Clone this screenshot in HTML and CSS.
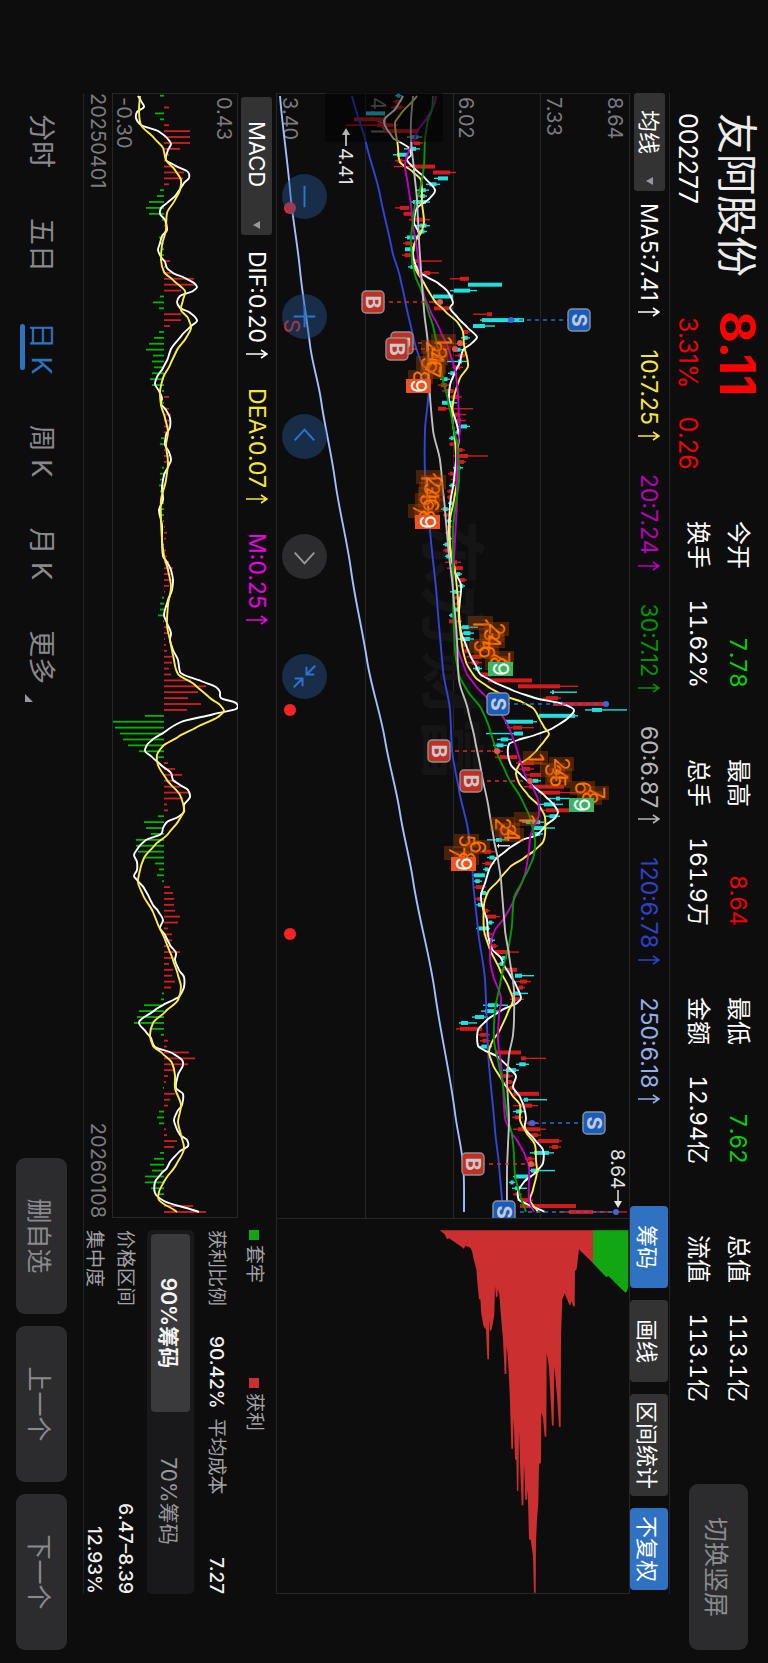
FILE: index.html
```html
<!DOCTYPE html>
<html lang="zh-CN">
<head>
    <meta charset="UTF-8">
    <meta name="viewport" content="width=device-width, initial-scale=1.0">
    <title>友阿股份 002277</title>
    <link rel="stylesheet" href="styles.css">
</head>
<body>
    <svg class="defs" aria-hidden="true">
        <symbol id="arrow-up" viewBox="0 0 12 22">
            <path d="M6 22V1M2 7L6 1l4 6" fill="none" stroke="currentColor" stroke-width="1.6"/>
        </symbol>
    </svg>
    <div class="screen">
        <header class="quote">
            <h1 class="name">友阿股份</h1>
            <strong class="price">8.11</strong>
            <span class="code">002277</span>
            <span class="change"><span>3.31%</span><span>0.26</span></span>
        </header>
        <dl class="stats">
            <div><dt>今开</dt><dd class="down">7.78</dd></div>
            <div><dt>最高</dt><dd class="up">8.64</dd></div>
            <div><dt>最低</dt><dd class="down">7.62</dd></div>
            <div><dt>总值</dt><dd>113.1亿</dd></div>
            <div><dt>换手</dt><dd>11.62%</dd></div>
            <div><dt>总手</dt><dd>161.9万</dd></div>
            <div><dt>金额</dt><dd>12.94亿</dd></div>
            <div><dt>流值</dt><dd>113.1亿</dd></div>
        </dl>
        <button class="soft-btn rotate-btn">切换竖屏</button>

        <main class="board">
            <div class="toolbar">
                <span class="picker">
                    <select aria-label="主图指标"><option>均线</option></select>
                </span>
                <ul class="values">
                    <li class="ma5">MA5:7.41<svg><use href="#arrow-up"/></svg></li>
                    <li class="ma10">10:7.25<svg><use href="#arrow-up"/></svg></li>
                    <li class="ma20">20:7.24<svg><use href="#arrow-up"/></svg></li>
                    <li class="ma30">30:7.12<svg><use href="#arrow-up"/></svg></li>
                    <li class="ma60">60:6.87<svg><use href="#arrow-up"/></svg></li>
                    <li class="ma120">120:6.78<svg><use href="#arrow-up"/></svg></li>
                    <li class="ma250">250:6.18<svg><use href="#arrow-up"/></svg></li>
                </ul>
                <div class="tools">
                    <button class="on">筹码</button>
                    <button>画线</button>
                    <button>区间统计</button>
                    <button class="on">不复权</button>
                </div>
            </div>

            <section class="charts">
                <div class="price-pane">
                    <svg id="price-chart" viewBox="0 0 1125 354"></svg>
                    <div class="controls">
                        <button aria-label="缩小"><svg viewBox="0 0 46 46"><path d="M12 23h22"/></svg></button>
                        <button aria-label="放大"><svg viewBox="0 0 46 46"><path d="M12 23h22M23 12v22"/></svg></button>
                        <button aria-label="向左"><svg viewBox="0 0 46 46"><path d="M27 13L16 23l11 10"/></svg></button>
                        <button aria-label="向右" class="off"><svg viewBox="0 0 46 46"><path d="M19 13l11 10-11 10"/></svg></button>
                        <button aria-label="收起"><svg viewBox="0 0 46 46"><path d="M12 12l9 9M21 13v8h-8M34 34l-9-9M25 33v-8h8"/></svg></button>
                    </div>
                </div>
                <div class="macd-bar">
                    <span class="picker">
                        <select aria-label="副图指标" class="wide"><option>MACD</option></select>
                    </span>
                    <ul class="values">
                        <li class="ma5">DIF:0.20<svg><use href="#arrow-up"/></svg></li>
                        <li class="ma10">DEA:0.07<svg><use href="#arrow-up"/></svg></li>
                        <li class="macd">M:0.25<svg><use href="#arrow-up"/></svg></li>
                    </ul>
                </div>
                <svg id="macd-chart" viewBox="0 0 1125 126"></svg>
                <div class="dates"><span>20250401</span><span>20260108</span></div>
            </section>

            <aside class="chips">
                <svg id="chip-chart" viewBox="0 0 1128 1062"></svg>
                <div class="chip-info">
                    <div class="legend"><span class="lock">套牢</span><span class="gain">获利</span></div>
                    <div class="pair">
                        <span>获利比例</span><b>90.42%</b><span>平均成本</span><b>7.27</b>
                    </div>
                    <div class="segment">
                        <button class="active">90%筹码</button>
                        <button>70%筹码</button>
                    </div>
                    <div class="rows">
                        <div><span>价格区间</span><b>6.47–8.39</b></div>
                        <div><span>集中度</span><b>12.93%</b></div>
                    </div>
                </div>
            </aside>
        </main>

        <footer class="bottom">
            <nav class="tabs">
                <a href="#">分时</a>
                <a href="#">五日</a>
                <a href="#" class="active">日 K</a>
                <a href="#">周 K</a>
                <a href="#">月 K</a>
                <a href="#" class="more">更多</a>
            </nav>
            <div class="actions">
                <button class="soft-btn">删自选</button>
                <button class="soft-btn">上一个</button>
                <button class="soft-btn">下一个</button>
            </div>
        </footer>
    </div>
    <script src="chart.js"></script>
</body>
</html>
```

FILE: styles.css
```css
* {
    box-sizing: border-box;
}
body {
    margin: 0;
    height: 100vh;
    overflow: hidden;
    background: #0d0d0d;
    color: #fff;
    font-family: Inter, "Noto Sans CJK SC", sans-serif;
}
h1, dl, dd, ul {
    margin: 0;
    padding: 0;
}
button, select {
    font-family: inherit;
    border: 0;
    margin: 0;
    padding: 0;
}
.defs {
    position: absolute;
    width: 0;
    height: 0;
}

/* landscape layout turned onto the portrait window */
.screen {
    width: 100vh;
    height: 100vw;
    transform-origin: 0 0;
    transform: translateX(100vw) rotate(90deg);
    display: grid;
    grid-template-columns: 428px 1fr auto;
    grid-template-rows: 98px auto 1fr;
    padding: 0 13px 0 93px;
}

/* header */
.quote {
    display: grid;
    grid-template-columns: 198px auto;
    grid-template-rows: 50px 32px;
    row-gap: 8px;
    align-content: start;
    align-items: center;
    padding: 6px 0 0 20px;
}
.name {
    font-size: 41px;
    line-height: 50px;
    font-weight: 400;
    color: #ececec;
}
.price {
    font-size: 49px;
    line-height: 50px;
    font-weight: 700;
    color: #f00;
}
.code, .change {
    font-size: 25px;
    line-height: 32px;
}
.change {
    display: flex;
    gap: 28px;
    padding-left: 6px;
    color: #f00000;
}
.stats {
    display: grid;
    grid-template-columns: repeat(4, 167px);
    column-gap: 71px;
    grid-auto-rows: 40px;
    padding-top: 10px;
    font-size: 24px;
    line-height: 40px;
}
.stats div {
    display: flex;
    justify-content: space-between;
}
.stats dd {
    font-size: 23px;
    font-variant-numeric: tabular-nums;
}
.stats .up {
    color: #f00000;
}
.stats .down {
    color: #00d200;
}
.soft-btn {
    height: 51px;
    width: 156px;
    border-radius: 9px;
    background: #2c2c2e;
    color: #8a8a8f;
    font-size: 25px;
}
.rotate-btn {
    width: 166px;
    height: 59px;
    margin-top: 20px;
}

/* board */
.board {
    grid-column: 1 / -1;
    margin-right: 56px;
    display: grid;
    grid-template-columns: 1fr 376px;
    border-top: 1px solid #232325;
    border-bottom: 1px solid #232325;
}
.toolbar {
    grid-column: 1 / -1;
    height: 39px;
    display: flex;
    align-items: center;
}
.picker {
    position: relative;
    display: flex;
}
.picker::after {
    content: "";
    position: absolute;
    right: 6px;
    top: 12px;
    border: 4px solid transparent;
    border-top: 7px solid #98989c;
    border-bottom: 0;
}
.picker select {
    appearance: none;
    width: 98px;
    height: 31px;
    padding-left: 17px;
    border-radius: 3px;
    background: #333;
    color: #fff;
    font-size: 22px;
}
.picker select.wide {
    width: 138px;
    padding-left: 24px;
}
.values {
    display: flex;
    gap: 32px;
    padding-left: 12px;
    list-style: none;
    font-size: 23px;
    line-height: 38px;
}
.values li {
    display: flex;
    align-items: center;
    gap: 5px;
}
.values svg {
    width: 12px;
    height: 22px;
}
.macd-bar .values {
    gap: 28px;
    padding-left: 16px;
}
.ma5 { color: #fff; }
.ma10 { color: #f5e63c; }
.ma20 { color: #b900b9; }
.ma30 { color: #009100; }
.ma60 { color: #b4b4b4; }
.ma120 { color: #3040c8; }
.ma250 { color: #94aeea; }
.macd { color: #ec00e4; }
.tools {
    display: flex;
    gap: 12px;
    margin-left: auto;
    padding-right: 4px;
}
.tools button {
    height: 38px;
    min-width: 82px;
    padding: 0 7px;
    border-radius: 4px;
    background: #333;
    color: #fff;
    font-size: 22px;
}
.tools .on {
    background: #3072c2;
}
.price-pane {
    position: relative;
}
.price-pane > svg, #macd-chart, #chip-chart {
    display: block;
    width: 100%;
}
.controls {
    position: absolute;
    left: 81px;
    bottom: 6px;
    display: flex;
    gap: 75px;
}
.controls button {
    width: 45px;
    height: 45px;
    border-radius: 50%;
    background: rgba(36, 84, 144, .45);
    color: #2f74c8;
}
.controls .off {
    background: #2c2c2e;
    color: #98989c;
}
.controls svg {
    display: block;
    fill: none;
    stroke: currentColor;
    stroke-width: 2;
}
.macd-bar {
    height: 38px;
    display: flex;
    align-items: center;
    padding-left: 4px;
}
.dates {
    display: flex;
    justify-content: space-between;
    font-size: 20px;
    line-height: 28px;
    color: #7c7c80;
}

/* chip panel */
.chip-info {
    padding: 6px 0 0 12px;
    font-size: 19px;
    color: #a2a2a6;
}
.chip-info b {
    font-weight: 500;
    color: #f0f0f0;
}
.legend {
    display: flex;
    line-height: 32px;
}
.legend span {
    width: 148px;
    display: flex;
    align-items: center;
    gap: 5px;
}
.legend span::before {
    content: "";
    width: 10px;
    height: 10px;
    background: #12a612;
}
.legend .gain::before {
    background: #cc2f30;
}
.pair {
    display: flex;
    line-height: 44px;
}
.pair span:first-child {
    margin-right: 30px;
}
.pair span:nth-child(3) {
    margin-left: 10px;
}
.pair b:last-child {
    margin-left: auto;
}
.segment {
    display: flex;
    height: 47px;
    padding: 4px;
    border-radius: 5px;
    background: #19191b;
}
.segment button {
    flex: 1;
    border-radius: 4px;
    background: none;
    color: #98989c;
    font-size: 21px;
}
.segment .active {
    background: #3a3a3c;
    color: #f4f4f4;
    font-weight: 600;
}
.rows {
    display: grid;
    gap: 11px;
    padding-top: 12px;
    line-height: 20px;
}
.rows div {
    display: flex;
    justify-content: space-between;
}

/* bottom bar */
.bottom {
    grid-column: 1 / -1;
    display: flex;
    justify-content: space-between;
    align-items: center;
}
.tabs {
    display: flex;
    gap: 50px;
    padding-left: 21px;
    font-size: 27px;
    line-height: 40px;
}
.tabs a {
    position: relative;
    color: #88888d;
    text-decoration: none;
    white-space: nowrap;
}
.tabs .active {
    color: #3072c2;
}
.tabs .active::after {
    content: "";
    position: absolute;
    left: 2px;
    right: 5px;
    bottom: -1px;
    height: 5px;
    border-radius: 3px;
    background: #3072c2;
}
.tabs .more::after {
    content: "";
    position: absolute;
    right: -18px;
    bottom: 4px;
    border: 4px solid transparent;
    border-right-color: #98989c;
    border-bottom-color: #98989c;
}
.actions {
    display: flex;
    gap: 12px;
}

/* chart drawing */
.grid line, .grid rect {
    stroke: #262628;
    fill: none;
}
.axis {
    font-size: 20px;
    fill: #7c7c80;
}
.note {
    font-size: 19px;
    fill: #e4e4e4;
}
.watermark {
    font-size: 66px;
    font-weight: 700;
    fill: #151515;
}
.mark {
    font-size: 20px;
    font-weight: 700;
    text-anchor: middle;
    fill: #c6c9d0;
}
.tag {
    font-size: 22px;
    text-anchor: middle;
    fill: #ff7300;
}
.tag-nine {
    font-size: 22px;
    text-anchor: middle;
    fill: #fff;
}
.signal {
    font-size: 22px;
    fill: #ff2424;
    text-anchor: middle;
}
```

FILE: chart.js
```javascript
// x is measured from the left of the screen, levels from its foot
const LEFT = 93;
const STEP = 5.906;
const FIRST = 95.7;
const NS = 'http://www.w3.org/2000/svg';

function add(parent, tag, attrs, text) {
    const el = document.createElementNS(NS, tag);
    for (const key in attrs) {
        el.setAttribute(key, attrs[key]);
    }
    if (text !== undefined) {
        el.textContent = text;
    }
    parent.appendChild(el);
    return el;
}

function barX(i) {
    return FIRST + STEP * i - LEFT;
}

// "x,level x,level" -> curve through every point
function drawLine(svg, top, data, color) {
    const pts = data.trim().split(/\s+/).map(p => {
        const [x, v] = p.split(',').map(Number);
        return [x - LEFT, top - v];
    });
    let d = 'M' + pts[0];
    for (let i = 0; i < pts.length - 1; i++) {
        const a = pts[i], b = pts[i + 1];
        const before = pts[i - 1] || a, after = pts[i + 2] || b;
        const c1 = [a[0] + (b[0] - a[0]) / 3, a[1] + (b[1] - before[1]) / (b[0] - before[0]) * (b[0] - a[0]) / 4];
        const c2 = [b[0] - (b[0] - a[0]) / 3, b[1] - (after[1] - a[1]) / (after[0] - a[0]) * (b[0] - a[0]) / 4];
        d += 'C' + c1 + ' ' + c2 + ' ' + b;
    }
    add(svg, 'path', { d: d, fill: 'none', stroke: color, 'stroke-width': 1.9, 'stroke-linejoin': 'round' });
}

const PRICE_TOP = 630;
const MACD_TOP = 238;

// r = rise, c = fall, w = flat; low-high, then the body when it is not the inner part
const candles = `c395-402 r393-402 r391-405 c366-385-366-385 r354-385-354-385 r346-398-377-393 r384-418-384-418 c407-422 r411-423 c404-420
c393-407-397-407 r395-405 r394-435-413-435 r433-456-433-450 c434-448-438-448 c426-440 c416-429 c418-427 c410-430-413-426 r395-409-400-409
r403-415-404-412 r409-430 c416-430 c417-427 c405-420-407-417 r403-413 c405-415-405-415 r402-413 r412-442-413-419 c408-418
r420-439-424-430 r450-469-460-469 c468-502-468-502 c450-477-454-470 c433-453-433-453 r432-443 r434-453-434-449 r473-492-487-492 c480-524-482-524 c473-495-473-485
r462-470 c461-470 r455-467 c453-463 r455-468 c447-467-458-462 r452-463 c448-457 c440-450 r438-450
r442-457 r448-462 c442-457-442-454 r438-473-438-446 r450-466-455-460 r452-466-457-461 c458-470 c455-460 c449-455 r449-454
r455-465 r453-488-455-468 r458-466 c453-463 r448-455 r451-458 c449-455 r447-453 r447-452 c448-454
c441-450 r443-449 c446-452 r446-452 r445-451 c447-452 c443-450 r443-450 c445-450 r445-461
r447-463-452-463 c455-462 r458-467 c458-465 c450-460 r454-460 r455-460 c453-460 c449-454 r449-462-449-456
c460-478-462-469 c460-474 c458-474-462-470 r462-468 r463-470 r467-482-470-481 r468-482 c473-482 r480-492-480-492 r488-532-488-532
r518-578-518-560 c550-577-552-554 r543-561-546-558 r553-607-553-607 c585-627-592-602 c539-578-539-575 c505-537-505-533 r507-534-513-522 c486-523-514-523 c497-512
c493-507 r492-503 r495-517-500-517 r516-543-518-534 r518-534 r524-541-530-541 c530-541 r524-564-529-564 r538-582-541-560 c546-570-556-560
c539-563-544-555 r540-570-546-570 c546-560 c522-544-526-540 c532-555-534-545 c531-543 c487-508-496-502 w497-510-498-499 r480-495 c487-497
r482-495 c483-490 c473-485-474-485 c473-482 r473-486-476-483 c480-488 r475-484 c476-484 r482-490 r484-500-487-496
c487-494 c476-490-478-489 r483-493 c487-495 r490-498 r495-519-495-510 c500-507 c498-505 r500-517-507-517 c515-534-515-522
r513-531-520-527 r517-525 c512-528-515-520 r510-524 c483-508-488-498 c481-499-485-495 c472-488-475-484 c459-477-461-468 r456-482-460-482 r477-490
r480-490 c478-492 r495-521-495-521 r521-546-521-526 c516-529 c503-519-506-516 r500-513 r505-514 r508-515 r513-539-514-539
c523-547-524-528 r513-538-520-532 c513-525 r512-523 r524-539 r513-546-518-540 r528-541 r533-562-538-559 r549-561 c530-554-534-549
r525-535 r528-537 c529-555-531-539 c513-532-514-528 c509-515 c512-527-515-520 r513-522 r517-533 r520-576-520-576 r559-627-569-593`.trim().split(/\s+/);

const histogram = [-4, 0, 5, -9, -4, 5, 26, 26, 26, 16, 5, 3, 13, 20, 19, 5, -4, -7, -15, -18, -15, -2, 2, 2, -5, -4, -3, -2, 6, 3,
    10, 30, 32, 17, -4, -11, -5, 17, 17, 6, -5, -10, -15, -18, -11, -12, -10, -12, -14, -12, -2, 5, -3, 5, 7, 7, 5, 3, -3, -4,
    1, 5, 4, -2, -4, -4, -5, -4, -1, -2, -3, -3, -1, 1, 3, 2, -1, 2, 3, 5, 9, 7, 8, 5, 1, -2, -4, -4, -6, -1,
    4, 4, 1, 2, 3, 8, 8, 5, 7, 27, 42, 34, 24, 37, 23, -19, -51, -49, -44, -41, -36, -25, -8, 4, 11, 18, 12, 16, 25, 19,
    3, 4, -6, -20, -18, -13, -28, -28, -26, -19, -9, -5, -7, -2, 6, 9, 10, 10, 11, 16, 14, 4, 8, 8, 6, 16, 11, 5, 9, 8,
    11, 7, -2, -3, -20, -25, -27, -30, -13, -3, 4, 3, 25, 31, 24, 10, 4, 2, -1, 11, 6, 4, -5, -7, -5, 2, 3, 13, 10, -4,
    -10, -14, -12, -19, -19, -13, -6, 0, 29, 42];

const averages = [
    ['#a4beff', `96,280 190,290 270,300 345,310 400,321 480,335 570,351 660,367 740,385 813,400 880,413 993,435 1113,455 1163,463 1185,464 1212,464`],
    ['#3344d8', `96,352 143,366 195,380 250,392 277,400 300,405 340,414 375,425 388,429 400,428 430,425 475,425 530,430 600,437 670,443 710,450 750,452 790,459 830,468 860,472 880,473 930,478 980,485 1050,488 1130,495 1165,499 1212,503`],
    ['#fff', `96,403 108,396 121,384 138,393 142,400 148,409 155,411 160,407 168,414 177,424 190,435 198,430 208,417 214,415 223,414 233,419 240,416 250,413 260,414 272,419 277,427 283,438 292,448 303,453 308,450 318,458 327,467 337,477 343,472 350,463 362,460 372,455 385,450 400,449 412,453 425,457 437,459 460,456 480,454 505,450 530,449 550,450 570,454 585,461 600,460 612,459 632,461 645,466 655,470 668,477 674,480 681,492 690,512 698,535 704,563 710,574 718,568 728,553 735,535 740,518 744,509 755,508 765,511 775,521 785,532 795,544 805,554 812,558 818,555 825,546 835,537 840,522 850,507 860,495 870,489 880,486 895,481 905,482 920,487 935,488 949,492 958,501 965,504 975,510 985,516 998,521 1003,517 1010,502 1020,487 1030,478 1046,478 1050,484 1057,498 1070,511 1076,516 1087,513 1097,520 1107,524 1118,526 1128,525 1140,535 1150,543 1163,543 1172,536 1182,524 1192,518 1200,519 1204,527 1212,545`],
    ['#ffec4a', `96,417 115,400 123,395 147,398 162,400 172,413 180,421 203,422 222,424 233,421 242,415 253,412 265,413 272,417 283,424 300,434 311,445 323,458 332,463 345,464 366,468 378,460 397,454 415,452 440,455 480,457 500,454 520,450 545,450 570,455 600,458 620,459 645,462 662,466 677,475 686,487 696,505 702,522 709,534 718,539 727,544 734,549 740,545 750,537 757,530 765,519 773,516 783,519 795,528 807,540 817,545 835,545 842,543 850,535 858,524 867,510 880,499 892,488 905,484 930,484 947,489 970,500 988,509 1000,513 1012,508 1030,500 1042,492 1052,489 1065,493 1080,502 1095,512 1105,520 1120,520 1132,526 1145,535 1160,536 1172,537 1190,533 1200,530 1212,538`],
    ['#c000c0', `96,436 105,434 118,427 130,418 140,414 150,409 165,405 185,408 205,411 225,413 250,417 272,420 295,424 310,430 330,440 350,449 375,456 395,458 420,459 430,460 450,457 500,457 540,455 580,453 620,454 645,457 672,466 685,475 698,487 712,500 730,510 750,517 775,525 788,533 800,538 815,539 828,533 838,530 850,529 870,526 880,523 902,513 917,505 930,495 942,491 960,490 975,493 998,501 1015,499 1040,498 1065,501 1085,503 1118,505 1132,511 1142,518 1155,525 1167,529 1200,529 1212,534`],
    ['#009a00', `96,433 110,432 120,428 140,425 165,424 190,420 205,415 220,413 240,411 260,412 275,415 290,421 307,427 330,434 355,439 380,443 400,448 425,453 450,458 480,459 510,455 530,453 600,453 650,455 675,459 690,467 710,482 730,490 750,496 775,507 800,522 818,530 840,535 855,534 868,529 880,523 898,514 925,512 945,509 965,504 985,500 1010,495 1040,494 1065,499 1085,503 1115,507 1135,512 1155,514 1175,515 1195,520 1212,526`],
    ['#c0c0c0', `96,413 120,411 140,411 170,414 200,417 240,419 270,421 310,424 345,428 380,429 430,433 460,440 480,442 510,445 545,448 590,453 640,457 680,459 710,468 740,475 770,481 810,489 840,494 860,498 880,501 930,505 955,509 990,514 1020,514 1035,513 1055,509 1080,507 1100,508 1120,509 1145,508 1170,507 1212,507`]
];

const dif = `96,138 101,141 107,144 112,137 118,136 125,141 131,158 138,167 144,171 150,168 160,166 166,176 172,188 178,189 183,184 195,176 203,167 208,161 214,160 220,165 230,167 236,162 243,160 250,158 257,161 262,165 268,167 273,173 278,185 283,194 287,197 291,193 296,180 302,177 308,180 312,189 317,195 321,197 327,190 335,182 349,171 358,168 368,163 377,157 384,155 391,159 398,162 404,161 410,166 418,170 427,170 435,166 445,165 452,169 460,171 467,168 475,164 488,162 500,163 510,159 525,162 540,162 556,163 562,167 570,171 580,173 590,172 600,168 615,164 623,167 633,171 640,170 650,173 660,178 672,180 675,184 681,201 687,216 692,220 698,221 703,236 709,236 714,214 722,181 731,166 740,152 745,147 751,145 757,152 765,161 773,171 780,173 785,180 790,188 797,190 805,184 812,184 817,178 822,167 828,163 834,161 840,146 848,138 855,134 862,137 870,137 876,134 880,137 888,144 897,149 905,153 911,158 920,163 928,160 935,165 945,170 953,176 960,175 970,179 977,184 987,184 997,179 999,175 1005,163 1010,155 1022,139 1032,146 1038,151 1047,155 1053,172 1060,182 1065,183 1075,178 1088,176 1094,183 1105,182 1112,177 1120,174 1127,176 1135,180 1140,187 1146,188 1152,179 1162,170 1168,167 1174,161 1182,155 1193,155 1201,164 1212,199`;
const dea = `96,140 110,139 125,141 138,154 148,163 160,166 170,175 180,181 190,180 200,175 213,167 230,166 245,162 260,161 272,164 280,173 291,185 300,183 310,181 318,188 328,191 338,186 350,177 365,170 378,163 392,160 405,161 418,165 432,168 445,166 462,168 480,166 500,161 520,161 540,162 556,164 570,168 587,171 605,168 625,167 645,171 660,174 674,178 685,195 698,210 705,220 711,224 717,218 727,197 737,178 746,163 755,157 765,158 780,167 795,180 810,184 820,179 834,168 845,155 858,144 870,140 882,138 895,143 912,153 922,157 942,166 960,173 975,178 987,181 1000,178 1012,165 1023,153 1035,150 1046,153 1053,162 1063,172 1075,175 1088,175 1105,181 1122,178 1135,181 1149,184 1165,176 1180,165 1192,159 1200,159 1212,177`;

// label, x, box level, dot level
const marks = [
    ['B', 302, 373, 440], ['B', 343, 402, 460], ['B', 349, 397, 455], ['B', 751, 439, 497], ['B', 781, 471, 530], ['B', 1164, 473, 531],
    ['S', 320, 579, 511], ['S', 704, 498, 606], ['S', 1123, 594, 532], ['S', 1212, 504, 616]
];

// digit, x, level
const tags = [
    [1, 341, 444], [2, 347, 434], [3, 353, 439], [4, 358, 436], [5, 363, 429], [6, 367, 434], [7, 372, 433], [8, 377, 421], [9, 386, 419, '#f0541e'],
    [1, 477, 429], [2, 482, 434], [3, 489, 432], [4, 494, 431], [5, 500, 428], [6, 505, 431], [7, 511, 421], [8, 516, 427], [9, 522, 428, '#f0541e'],
    [1, 623, 481], [2, 629, 497], [3, 635, 492], [4, 641, 493], [5, 646, 482], [6, 652, 487], [7, 658, 502], [8, 663, 498], [9, 669, 501, '#3cb563'],
    [1, 758, 536], [2, 764, 562], [3, 770, 553], [4, 775, 560], [5, 781, 558], [6, 788, 583], [7, 793, 597], [8, 798, 590], [9, 805, 582, '#3cb563'],
    [1, 819, 527], [2, 824, 503], [3, 830, 508], [4, 835, 512], [5, 841, 467], [6, 847, 478], [7, 853, 457], [8, 858, 467], [9, 864, 464, '#f0541e']
];

function drawPrice() {
    const svg = document.getElementById('price-chart');
    const y = v => PRICE_TOP - v;

    const grid = add(svg, 'g', { class: 'grid' });
    [0, 89, 176, 264, 353].forEach(v => add(grid, 'line', { x1: 0, x2: 1125, y1: v + 0.5, y2: v + 0.5 }));
    add(grid, 'line', { x1: 0.5, x2: 0.5, y1: 0, y2: 354 });
    add(svg, 'text', { x: 426, y: 202, class: 'watermark' }, '东方财富');
    [['8.64', 22], ['7.33', 83], ['6.02', 171], ['4.71', 259], ['3.40', 347]].forEach(a => {
        add(svg, 'text', { x: 4, y: a[1], class: 'axis' }, a[0]);
    });

    const colors = { r: '#d21c1c', c: '#22dede', w: '#e8e8e8' };
    candles.forEach((item, i) => {
        const n = item.slice(1).split('-').map(Number);
        const pad = (n[1] - n[0]) / 4;
        const low = n.length > 2 ? n[2] : n[0] + pad;
        const high = n.length > 2 ? n[3] : n[1] - pad;
        const x = barX(i);
        const fill = colors[item[0]];
        add(svg, 'rect', { x: x - 0.7, y: y(n[1]), width: 1.4, height: n[1] - n[0], fill: fill });
        add(svg, 'rect', { x: x - 2, y: y(high), width: 4, height: Math.max(high - low, 1), fill: fill });
    });

    averages.forEach(a => drawLine(svg, PRICE_TOP, a[1], a[0]));
    add(svg, 'rect', { x: 0, y: y(443), width: 49, height: 118, fill: '#000', opacity: 0.5 });

    marks.forEach(([label, mx, box, dot]) => {
        const x = mx - LEFT;
        const sell = label === 'S';
        add(svg, 'line', {
            x1: x, x2: x, y1: y(box), y2: y(dot), 'stroke-width': 1.4, 'stroke-dasharray': '4 4',
            stroke: sell ? '#1f6fd8' : '#d03224'
        });
        add(svg, 'circle', { cx: x, cy: y(dot), r: 3, fill: sell ? '#3d66d8' : '#e0584c' });
    });

    tags.forEach(([digit, tx, level, solid]) => {
        const x = tx - LEFT;
        add(svg, 'rect', { x: x - 7, y: y(level) - 12, width: 14, height: 25, fill: solid || 'rgba(176, 72, 0, .36)' });
        add(svg, 'text', { x: x, y: y(level) + 8, class: solid ? 'tag-nine' : 'tag' }, digit);
    });

    marks.forEach(([label, mx, box]) => {
        const x = mx - LEFT;
        add(svg, 'rect', {
            x: x - 11, y: y(box) - 11, width: 22, height: 22, rx: 4,
            fill: label === 'S' ? '#175cc0' : '#c4301f', stroke: '#8f9098', 'stroke-width': 1.4
        });
        add(svg, 'text', { x: x, y: y(box) + 7, class: 'mark' }, label);
    });

    add(svg, 'text', { x: 1056, y: 19, class: 'note' }, '8.64');
    add(svg, 'path', { d: 'M1097 12h12', stroke: '#e4e4e4', 'stroke-width': 1.5 });
    add(svg, 'path', { d: 'M1108 8l7 4-7 4z', fill: '#e4e4e4' });
    add(svg, 'text', { x: 55, y: 291, class: 'note' }, '4.41');
    add(svg, 'path', { d: 'M41 284h12', stroke: '#e4e4e4', 'stroke-width': 1.5 });
    add(svg, 'path', { d: 'M42 280l-7 4 7 4z', fill: '#b0b0b0' });

    [115, 617, 841].forEach(x => add(svg, 'circle', { cx: x, cy: 340, r: 6, fill: '#ff2424' }));
    add(svg, 'text', { x: 233, y: 346, class: 'signal' }, 'S');
}

function drawMacd() {
    const svg = document.getElementById('macd-chart');
    const base = MACD_TOP - 164;
    const grid = add(svg, 'g', { class: 'grid' });
    add(grid, 'rect', { x: 0.5, y: 0.5, width: 1124, height: 125 });
    add(svg, 'text', { x: 4, y: 21, class: 'axis' }, '0.43');
    add(svg, 'text', { x: 4, y: 121, class: 'axis' }, '-0.30');
    histogram.forEach((v, i) => {
        add(svg, 'rect', {
            x: barX(i) - 0.9, width: 1.8, y: v > 0 ? base - v : base, height: Math.abs(v),
            fill: v > 0 ? '#d01f1f' : '#00b400'
        });
    });
    drawLine(svg, MACD_TOP, dif, '#fff');
    drawLine(svg, MACD_TOP, dea, '#ffec4a');
}

// level, volume at that level
const gainShape = `120,93 135,105 142,120 148,117 160,125 185,142 192,148 198,139 205,143 212,145 217,155 222,180 230,210 234,260 238,300 242,300 245,345 252,382 259,390 263,480 268,480 269,360 271,396 276,390 280,370 284,345 286,260 289,295 294,290 294,270 299,285 303,340 310,420 315,524 320,524 321,440 325,480 330,580 335,748 340,748 342,655 346,780 350,782 352,875 356,875 358,695 362,820 366,918 371,918 373,790 377,902 382,900 384,870 388,1020 393,1022 400,1070 403,1180 408,1180 409,1030 412,960 416,910 418,795 424,790 425,640 430,655 435,712 440,712 441,460 448,505 457,680 462,678 464,500 472,590 478,683 483,683 484,410 488,300 495,282 503,302 511,320 516,305 520,320 525,322 526,215 531,210 534,185 538,150 580,192 580,93`;
const lockShape = `580,93 580,192 620,234 626,230 677,280 682,276 686,262 686,93`;

function drawChips() {
    const svg = document.getElementById('chip-chart');
    const toPoints = s => s.split(' ').map(p => {
        const [level, size] = p.split(',').map(Number);
        return (size - 56) + ',' + (691 - level);
    }).join(' ');
    const grid = add(svg, 'g', { class: 'grid' });
    add(grid, 'rect', { x: 1.5, y: 1.5, width: 1125, height: 1059, 'stroke-width': 3 });
    add(svg, 'polygon', { points: toPoints(gainShape), fill: '#cc2f30' });
    add(svg, 'polygon', { points: toPoints(lockShape), fill: '#12a612' });
}

drawPrice();
drawMacd();
drawChips();
```
